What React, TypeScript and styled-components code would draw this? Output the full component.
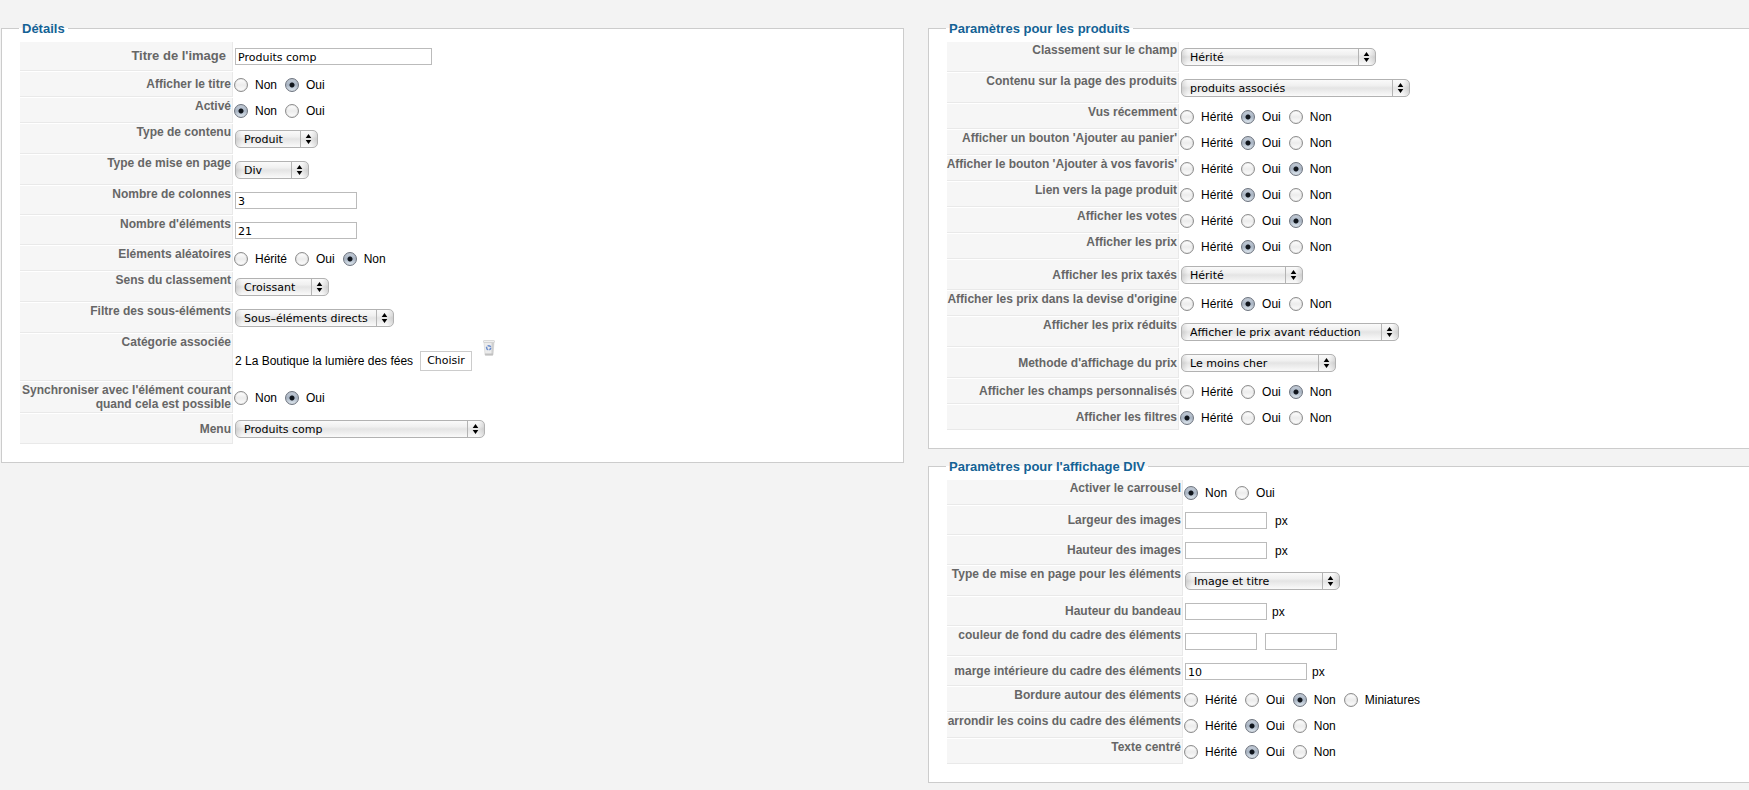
import React, { useId } from 'react';
import styled, { createGlobalStyle, css } from 'styled-components';

const GlobalStyle = createGlobalStyle`
  *, *::before, *::after { box-sizing: border-box; }
  body {
    margin: 0;
    background: #f3f3f3;
    color: #000;
    font: 12px/14px "Liberation Sans", Arial, sans-serif;
  }
`;

const uiFont = css`
  font-family: "DejaVu Sans", sans-serif;
  font-size: 11px;
  line-height: 14px;
`;

const Page = styled.main`
  display: grid;
  grid-template-columns: 11fr 10fr;
  column-gap: 24px;
  align-items: start;
  padding: 21px 0 7px 1px;
`;

const Column = styled.div`
  display: flex;
  flex-direction: column;
  gap: 10px;
  min-width: 0;
`;

const Panel = styled.fieldset<{ $open?: boolean }>`
  min-width: 0;
  margin: 0;
  padding: 6px 17px 18px;
  border: 1px solid #ccc;
  border-right-width: ${(p) => (p.$open ? 0 : 1)}px;
  background: #fff;
`;

const PanelTitle = styled.legend`
  padding: 0 3px;
  color: #146295;
  font-size: 13px;
  font-weight: bold;
  line-height: 15px;
`;

const Rows = styled.div<{ $labelWidth: number }>`
  display: grid;
  grid-template-columns: ${(p) => p.$labelWidth}px 1fr;
  row-gap: 1px;
  padding-left: 1px;
`;

const LabelCell = styled.div<{ $middle?: boolean; $large?: boolean }>`
  display: flex;
  justify-content: flex-end;
  align-items: ${(p) => (p.$middle ? 'center' : 'flex-start')};
  padding: 1px ${(p) => (p.$large ? 6 : 1)}px 1px 0;
  border-right: 1px solid #e9e9e9;
  border-bottom: 1px solid #e9e9e9;
  background: #f6f6f6;
  color: #666;
  font-size: ${(p) => (p.$large ? 13 : 12)}px;
  font-weight: bold;
  text-align: right;
  white-space: nowrap;
`;

const ControlCell = styled.div`
  display: flex;
  align-items: center;
  gap: 8px;
  padding: 6px 0 6px 2px;
`;

const RadioCell = styled.div`
  display: flex;
  align-items: center;
  gap: 8px;
  padding: 6px 0 5px 1px;
`;

const RadioOption = styled.label`
  display: flex;
  gap: 7px;
`;

const Radio = styled.input`
  appearance: none;
  width: 14px;
  height: 14px;
  margin: 0;
  border: 1px solid #8e8e8e;
  border-radius: 50%;
  background: linear-gradient(#fff 0%, #ececec 50%, #fdfdfd 100%);
  box-shadow: inset 0 0 1px #aaa;

  &:checked {
    border-color: #6d7480;
    background:
      radial-gradient(circle at center, #10151c 0 2px, transparent 3px),
      linear-gradient(#c3ccd8 0%, #a9b5c4 50%, #e0e9f1 100%);
  }
`;

const TextInput = styled.input<{ $width: number }>`
  ${uiFont}
  width: ${(p) => p.$width}px;
  height: 17px;
  padding: 1px 2px 0;
  border: 1px solid #bbb;
  border-radius: 0;
  background: #fff;
  color: #000;
`;

const Unit = styled.span<{ $close?: boolean }>`
  margin-left: ${(p) => (p.$close ? -3 : 0)}px;
`;

const SelectBox = styled.span<{ $width: number }>`
  position: relative;
  display: block;
  width: ${(p) => p.$width}px;
  height: 18px;
`;

const NativeSelect = styled.select`
  ${uiFont}
  appearance: none;
  display: block;
  width: 100%;
  height: 18px;
  padding: 1px 18px 0 8px;
  border: 1px solid #b2b2b2;
  border-radius: 5px;
  background:
    linear-gradient(90deg, rgba(0, 0, 0, 0.1), transparent 6px, transparent calc(100% - 6px), rgba(0, 0, 0, 0.1)),
    linear-gradient(#fafafa 0%, #f0f0f0 35%, #e4e4e4 50%, #fafafa 100%);
  color: #000;
`;

const Arrows = styled.svg`
  position: absolute;
  top: 1px;
  right: 1px;
  width: 17px;
  height: 16px;
  pointer-events: none;
`;

const CategoryCell = styled.div`
  display: flex;
  align-items: flex-start;
  gap: 11px;
  padding: 6px 0 10px 2px;
`;

const CategoryPick = styled.div`
  display: flex;
  align-items: center;
  gap: 3px;
  padding-top: 11px;
`;

const CategoryName = styled.span`
  min-width: 182px;
  white-space: nowrap;
`;

const ChooseButton = styled.button`
  ${uiFont}
  width: 52px;
  height: 20px;
  padding: 0;
  border: 1px solid #ccc;
  background: #fff;
  color: #000;
`;

const TrashButton = styled.button`
  display: block;
  width: 12px;
  height: 16px;
  padding: 0;
  border: 0;
  background: none;
`;

const HERITE = ['Hérité', 'Oui', 'Non'];
const YES_NO = ['Non', 'Oui'];

type LabelProps = { label: React.ReactNode; middle?: boolean; large?: boolean };

function RadioRow({ label, middle, options, value }: LabelProps & { options: string[]; value: string }) {
  const id = useId();
  return (
    <>
      <LabelCell $middle={middle} id={id}>{label}</LabelCell>
      <RadioCell role="radiogroup" aria-labelledby={id}>
        {options.map((option) => (
          <RadioOption key={option}>
            <Radio type="radio" name={`group${id}`} value={option} defaultChecked={option === value} />
            {option}
          </RadioOption>
        ))}
      </RadioCell>
    </>
  );
}

function SelectRow({ label, middle, value, width }: LabelProps & { value: string; width: number }) {
  const id = useId();
  return (
    <>
      <LabelCell $middle={middle}><label htmlFor={id}>{label}</label></LabelCell>
      <ControlCell>
        <SelectBox $width={width}>
          <NativeSelect id={id} defaultValue={value}>
            <option>{value}</option>
          </NativeSelect>
          <Arrows viewBox="0 0 17 16" aria-hidden="true">
            <path d="M0.5 0V16" stroke="#b4b4b4" />
            <path d="M8.5 3L11.3 7H5.7ZM8.5 13L11.3 9H5.7Z" fill="#000" />
          </Arrows>
        </SelectBox>
      </ControlCell>
    </>
  );
}

function InputRow({
  label, middle, large, value = '', width, unit, closeUnit, children,
}: LabelProps & { value?: string; width: number; unit?: string; closeUnit?: boolean; children?: React.ReactNode }) {
  const id = useId();
  return (
    <>
      <LabelCell $middle={middle} $large={large}><label htmlFor={id}>{label}</label></LabelCell>
      <ControlCell>
        <TextInput id={id} type="text" defaultValue={value} $width={width} />
        {children}
        {unit && <Unit $close={closeUnit}>{unit}</Unit>}
      </ControlCell>
    </>
  );
}

function TrashIcon() {
  return (
    <svg width="12" height="16" viewBox="0 0 12 16" aria-hidden="true">
      <path d="M1 2H11L10 15H2Z" fill="#ececec" stroke="#d2d2d2" strokeWidth="0.6" />
      <path d="M8.6 2.5H11L10 15H8.4Z" fill="#cfcfcf" />
      <path d="M2 13.4H10L9.8 15.4H2.2Z" fill="#c0c0c0" />
      <rect x="0.3" y="0.6" width="11.4" height="1.8" rx="0.9" fill="#f6f6f6" stroke="#bdbdbd" strokeWidth="0.6" />
      <circle
        cx="5.7" cy="7.8" r="2.1" fill="none" stroke="#6a8ccc"
        strokeWidth="1.5" strokeDasharray="3.4 1" strokeDashoffset="1"
      />
    </svg>
  );
}

export default function App() {
  return (
    <>
      <GlobalStyle />
      <Page>
        <Panel>
          <PanelTitle>Détails</PanelTitle>
          <Rows $labelWidth={213}>
            <InputRow label="Titre de l'image" middle large value="Produits comp" width={197} />
            <RadioRow label="Afficher le titre" middle options={YES_NO} value="Oui" />
            <RadioRow label="Activé" options={YES_NO} value="Non" />
            <SelectRow label="Type de contenu" value="Produit" width={83} />
            <SelectRow label="Type de mise en page" value="Div" width={74} />
            <InputRow label="Nombre de colonnes" value="3" width={122} />
            <InputRow label="Nombre d'éléments" value="21" width={122} />
            <RadioRow label="Eléments aléatoires" options={HERITE} value="Non" />
            <SelectRow label="Sens du classement" value="Croissant" width={94} />
            <SelectRow label="Filtre des sous-éléments" value="Sous–éléments directs" width={159} />
            <LabelCell>Catégorie associée</LabelCell>
            <CategoryCell>
              <CategoryPick>
                <CategoryName>2 La Boutique la lumière des fées</CategoryName>
                <ChooseButton type="button">Choisir</ChooseButton>
              </CategoryPick>
              <TrashButton type="button" aria-label="Supprimer"><TrashIcon /></TrashButton>
            </CategoryCell>
            <RadioRow
              label={<>Synchroniser avec l'élément courant<br />quand cela est possible</>}
              middle options={YES_NO} value="Oui"
            />
            <SelectRow label="Menu" middle value="Produits comp" width={250} />
          </Rows>
        </Panel>

        <Column>
          <Panel $open>
            <PanelTitle>Paramètres pour les produits</PanelTitle>
            <Rows $labelWidth={232}>
              <SelectRow label="Classement sur le champ" value="Hérité" width={195} />
              <SelectRow label="Contenu sur la page des produits" value="produits associés" width={229} />
              <RadioRow label="Vus récemment" options={HERITE} value="Oui" />
              <RadioRow label="Afficher un bouton 'Ajouter au panier'" options={HERITE} value="Oui" />
              <RadioRow label="Afficher le bouton 'Ajouter à vos favoris'" options={HERITE} value="Non" />
              <RadioRow label="Lien vers la page produit" options={HERITE} value="Oui" />
              <RadioRow label="Afficher les votes" options={HERITE} value="Non" />
              <RadioRow label="Afficher les prix" options={HERITE} value="Oui" />
              <SelectRow label="Afficher les prix taxés" middle value="Hérité" width={122} />
              <RadioRow label="Afficher les prix dans la devise d'origine" options={HERITE} value="Oui" />
              <SelectRow label="Afficher les prix réduits" value="Afficher le prix avant réduction" width={218} />
              <SelectRow label="Methode d'affichage du prix" middle value="Le moins cher" width={155} />
              <RadioRow label="Afficher les champs personnalisés" middle options={HERITE} value="Non" />
              <RadioRow label="Afficher les filtres" middle options={HERITE} value="Hérité" />
            </Rows>
          </Panel>

          <Panel $open>
            <PanelTitle>Paramètres pour l'affichage DIV</PanelTitle>
            <Rows $labelWidth={236}>
              <RadioRow label="Activer le carrousel" options={YES_NO} value="Non" />
              <InputRow label="Largeur des images" middle width={82} unit="px" />
              <InputRow label="Hauteur des images" middle width={82} unit="px" />
              <SelectRow label="Type de mise en page pour les éléments" value="Image et titre" width={155} />
              <InputRow label="Hauteur du bandeau" middle width={82} unit="px" closeUnit />
              <InputRow label="couleur de fond du cadre des éléments" width={72}>
                <TextInput type="text" aria-label="couleur de fond, aperçu" $width={72} />
              </InputRow>
              <InputRow label="marge intérieure du cadre des éléments" middle value="10" width={122} unit="px" closeUnit />
              <RadioRow label="Bordure autour des éléments" options={[...HERITE, 'Miniatures']} value="Non" />
              <RadioRow label="arrondir les coins du cadre des éléments" options={HERITE} value="Oui" />
              <RadioRow label="Texte centré" options={HERITE} value="Oui" />
            </Rows>
          </Panel>
        </Column>
      </Page>
    </>
  );
}
